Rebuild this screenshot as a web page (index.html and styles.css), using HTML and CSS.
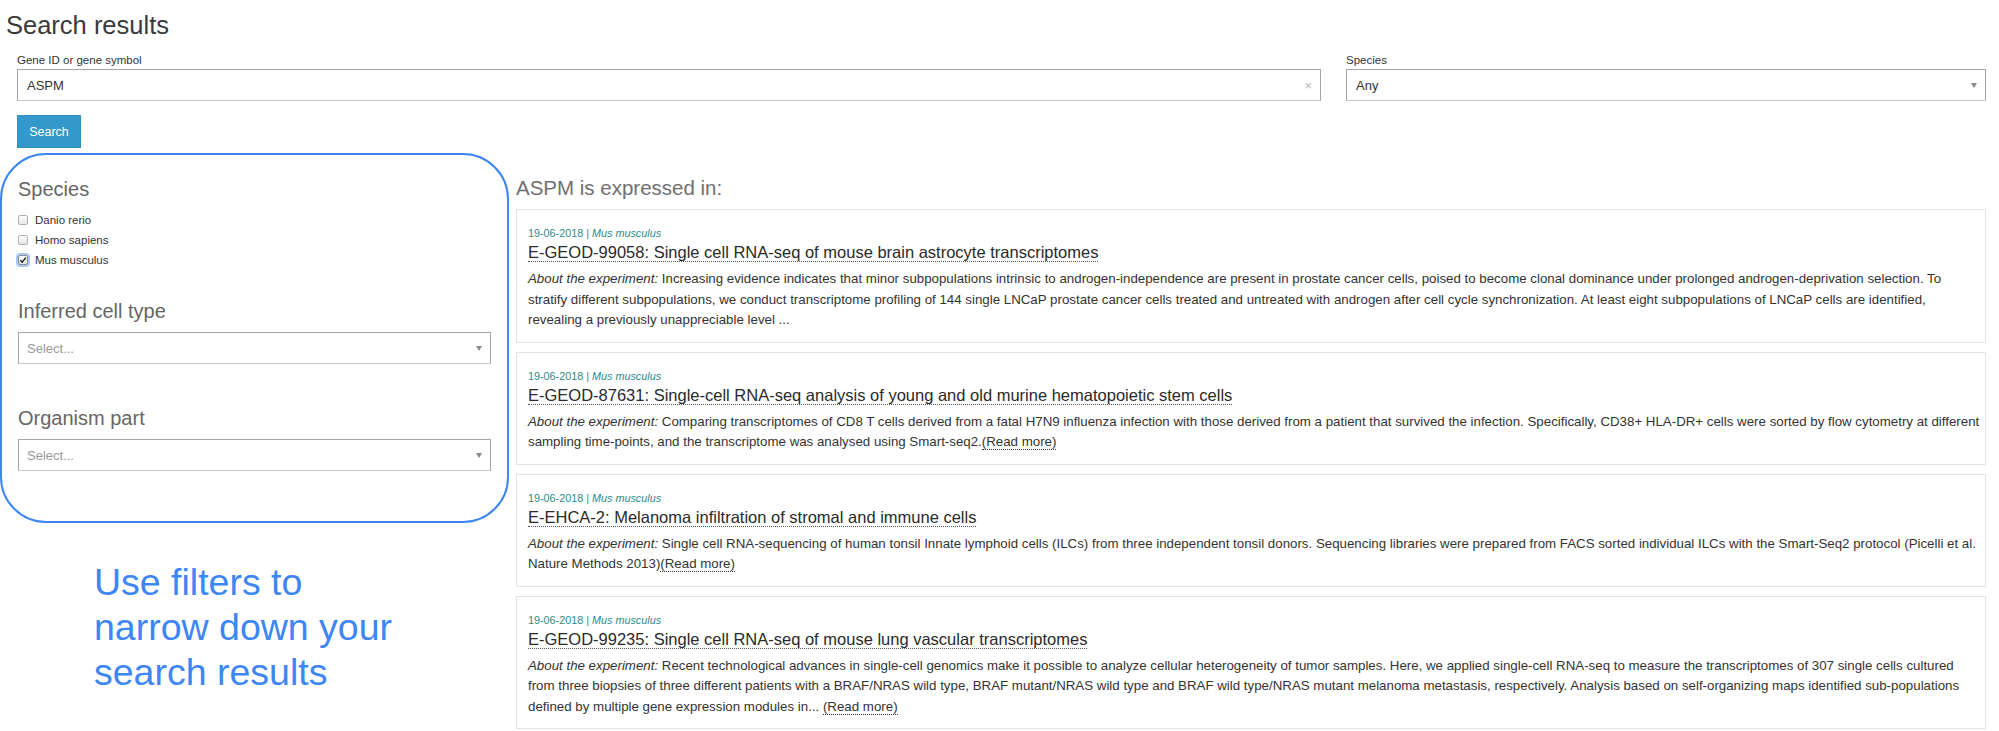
FILE: index.html
```html
<!DOCTYPE html>
<html lang="en">
<head>
<meta charset="utf-8">
<title>Search results</title>
<link rel="stylesheet" href="styles.css">
</head>
<body>
<div class="page">
  <h1 class="page-title">Search results</h1>

  <div class="search-form">
    <div class="field">
      <div class="field-label">Gene ID or gene symbol</div>
      <div class="text-input"><span class="value">ASPM</span><span class="clear">×</span></div>
    </div>
    <div class="field">
      <div class="field-label">Species</div>
      <div class="select"><span class="value">Any</span><span class="arrow"></span></div>
    </div>
  </div>
  <div class="btn-row"><span class="search-btn">Search</span></div>

  <div class="main">
    <div class="left">
      <aside class="filters">
        <h3 class="filter-title">Species</h3>
        <ul class="checks">
          <li class="check"><span class="box"></span><span>Danio rerio</span></li>
          <li class="check"><span class="box"></span><span>Homo sapiens</span></li>
          <li class="check"><span class="box checked"><svg width="8" height="8" viewBox="0 0 8 8"><path d="M1.3 4.2 L3.2 6.1 L6.8 1.6" fill="none" stroke="#222" stroke-width="1.5"/></svg></span><span>Mus musculus</span></li>
        </ul>
        <h3 class="filter-title spaced">Inferred cell type</h3>
        <div class="select filter-select"><span class="placeholder">Select...</span><span class="arrow"></span></div>
        <h3 class="filter-title spaced2">Organism part</h3>
        <div class="select filter-select"><span class="placeholder">Select...</span><span class="arrow"></span></div>
      </aside>
      <p class="hint">Use filters to<br>narrow down your<br>search results</p>
    </div>

    <section class="results">
      <h3 class="results-title">ASPM is expressed in:</h3>
      <div class="cards">
        <article class="card">
          <div class="meta">19-06-2018 | <i>Mus musculus</i></div>
          <div class="card-title"><span>E-GEOD-99058: Single cell RNA-seq of mouse brain astrocyte transcriptomes</span></div>
          <p class="desc"><i>About the experiment:</i> Increasing evidence indicates that minor subpopulations intrinsic to androgen-independence are present in prostate cancer cells, poised to become clonal dominance under prolonged androgen-deprivation selection. To<br>stratify different subpopulations, we conduct transcriptome profiling of 144 single LNCaP prostate cancer cells treated and untreated with androgen after cell cycle synchronization. At least eight subpopulations of LNCaP cells are identified,<br>revealing a previously unappreciable level ...</p>
        </article>
        <article class="card">
          <div class="meta">19-06-2018 | <i>Mus musculus</i></div>
          <div class="card-title"><span>E-GEOD-87631: Single-cell RNA-seq analysis of young and old murine hematopoietic stem cells</span></div>
          <p class="desc"><i>About the experiment:</i> Comparing transcriptomes of CD8 T cells derived from a fatal H7N9 influenza infection with those derived from a patient that survived the infection. Specifically, CD38+ HLA-DR+ cells were sorted by flow cytometry at different<br>sampling time-points, and the transcriptome was analysed using Smart-seq2.<span class="more">(Read more)</span></p>
        </article>
        <article class="card">
          <div class="meta">19-06-2018 | <i>Mus musculus</i></div>
          <div class="card-title"><span>E-EHCA-2: Melanoma infiltration of stromal and immune cells</span></div>
          <p class="desc"><i>About the experiment:</i> Single cell RNA-sequencing of human tonsil Innate lymphoid cells (ILCs) from three independent tonsil donors. Sequencing libraries were prepared from FACS sorted individual ILCs with the Smart-Seq2 protocol (Picelli et al.<br>Nature Methods 2013)<span class="more">(Read more)</span></p>
        </article>
        <article class="card">
          <div class="meta">19-06-2018 | <i>Mus musculus</i></div>
          <div class="card-title"><span>E-GEOD-99235: Single cell RNA-seq of mouse lung vascular transcriptomes</span></div>
          <p class="desc"><i>About the experiment:</i> Recent technological advances in single-cell genomics make it possible to analyze cellular heterogeneity of tumor samples. Here, we applied single-cell RNA-seq to measure the transcriptomes of 307 single cells cultured<br>from three biopsies of three different patients with a BRAF/NRAS wild type, BRAF mutant/NRAS wild type and BRAF wild type/NRAS mutant melanoma metastasis, respectively. Analysis based on self-organizing maps identified sub-populations<br>defined by multiple gene expression modules in... <span class="more">(Read more)</span></p>
        </article>
      </div>
    </section>
  </div>
</div>
</body>
</html>
```

FILE: styles.css
```css
* { box-sizing: border-box; }
html, body { margin: 0; padding: 0; background: #fff; }
body {
  font-family: "Liberation Sans", Arial, Helvetica, sans-serif;
  color: #333;
  width: 1999px;
  height: 731px;
  overflow: hidden;
}
.page { padding: 10px 13px 0 0; }

.page-title {
  margin: 0;
  padding-left: 6px;
  font-size: 25.5px;
  line-height: 30px;
  font-weight: normal;
  color: #3a3a3a;
}

.search-form {
  display: grid;
  grid-template-columns: 1304px minmax(0, 1fr);
  column-gap: 25px;
  margin: 12px 0 0 17px;
}
.field-label {
  font-size: 11.5px;
  line-height: 16px;
  color: #333;
  margin-bottom: 1px;
}
.text-input, .select {
  height: 32px;
  border: 1px solid #a6a6a6;
  border-bottom-color: #c8c8c8;
  background: #fff;
  display: flex;
  align-items: center;
  justify-content: space-between;
  padding: 0 8px 0 9px;
  font-size: 13px;
  color: #333;
}
.clear { color: #b5b5b5; font-size: 13px; }
.arrow {
  width: 0; height: 0;
  border-left: 3.5px solid transparent;
  border-right: 3.5px solid transparent;
  border-top: 5px solid #888;
}

.btn-row { margin: 14px 0 0 17px; height: 33px; display: flex; }
.search-btn {
  display: flex; align-items: center; justify-content: center;
  width: 64px; height: 33px;
  background: #3399cb;
  border: 1px solid #2f8fc0;
  color: #fff;
  font-size: 12.5px;
}

.main {
  display: grid;
  grid-template-columns: 509px minmax(0, 1fr);
  column-gap: 7px;
  margin-top: 5px;
}

.filters {
  border: 2px solid #3d86f4;
  border-radius: 46px;
  padding: 22px 16px 52px 16px;
  height: 370px;
}
.filter-title {
  margin: 0;
  font-size: 20px;
  line-height: 24px;
  font-weight: normal;
  color: #666;
}
.filter-title.spaced { margin-top: 29px; }
.filter-title.spaced2 { margin-top: 42px; }
.checks { list-style: none; margin: 9px 0 0 0; padding: 0; }
.check {
  display: flex; align-items: center;
  height: 20px;
  font-size: 11.5px;
  color: #333;
}
.box {
  width: 10px; height: 10px;
  border: 1px solid #b0b0b0;
  border-radius: 2px;
  background: linear-gradient(#fdfdfd, #e6e6e6);
  margin-right: 7px;
  display: flex; align-items: center; justify-content: center;
}
.box.checked {
  border-color: #8a8a8a;
  box-shadow: 0 0 0 2px #a9c8f6;
}
.filter-select { margin-top: 9px; height: 32px; padding: 0 8px 0 8px; }
.placeholder { color: #999; font-size: 13px; }

.hint {
  margin: 37px 0 0 94px;
  font-size: 37.5px;
  line-height: 45px;
  color: #3d86f4;
}

.results { padding-top: 23px; min-width: 0; }
.results-title {
  margin: 0 0 9px 0;
  font-size: 20.5px;
  line-height: 24px;
  font-weight: normal;
  color: #707070;
}
.cards { display: flex; flex-direction: column; gap: 9px; }
.card {
  border: 1px solid #e4e4e4;
  padding: 15px 11px 11px 11px;
  min-width: 0;
}
.meta {
  font-size: 10.8px;
  line-height: 16px;
  color: #2b8b8b;
}
.card-title {
  font-size: 16.5px;
  line-height: 22px;
  color: #2a2a2a;
}
.card-title span { border-bottom: 1px dotted #555; }
.desc {
  margin: 6px 0 0 0;
  font-size: 13.3px;
  line-height: 20.5px;
  color: #333;
  white-space: nowrap;
}
.more { border-bottom: 1px dotted #333; }
```
